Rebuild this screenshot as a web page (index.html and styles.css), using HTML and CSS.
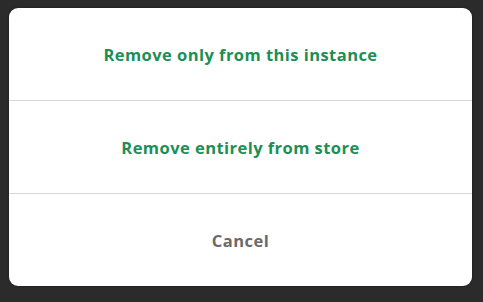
FILE: index.html
```html
<!DOCTYPE html>
<html>
<head>
<meta charset="utf-8">
<link rel="stylesheet" href="styles.css">
</head>
<body>
<div class="sheet">
  <button class="action primary">Remove only from this instance</button>
  <button class="action primary">Remove entirely from store</button>
  <button class="action cancel">Cancel</button>
</div>
</body>
</html>
```
FILE: styles.css
```css
html, body {
  margin: 0;
  padding: 0;
  width: 483px;
  height: 302px;
  background: #2b2b2b;
  overflow: hidden;
}
body {
  padding: 8px 11px 16px 9px;
  box-sizing: border-box;
  font-family: "Open Sans", "Liberation Sans", sans-serif;
}
.sheet {
  background: #fff;
  border-radius: 9px;
  display: flex;
  flex-direction: column;
  height: 278px;
  overflow: hidden;
  box-shadow: 0 0 3px rgba(0,0,0,0.4);
}
.action {
  flex: 1;
  border: 0;
  background: transparent;
  font-family: inherit;
  font-size: 16.5px;
  font-weight: 700;
  letter-spacing: 0.45px;
  padding: 1px 0 0;
  margin: 0;
  cursor: pointer;
}
.action + .action {
  border-top: 1px solid #d6d6d6;
}
.primary { color: #1b8f56; }
.cancel { color: #6a6a6a; }
```
